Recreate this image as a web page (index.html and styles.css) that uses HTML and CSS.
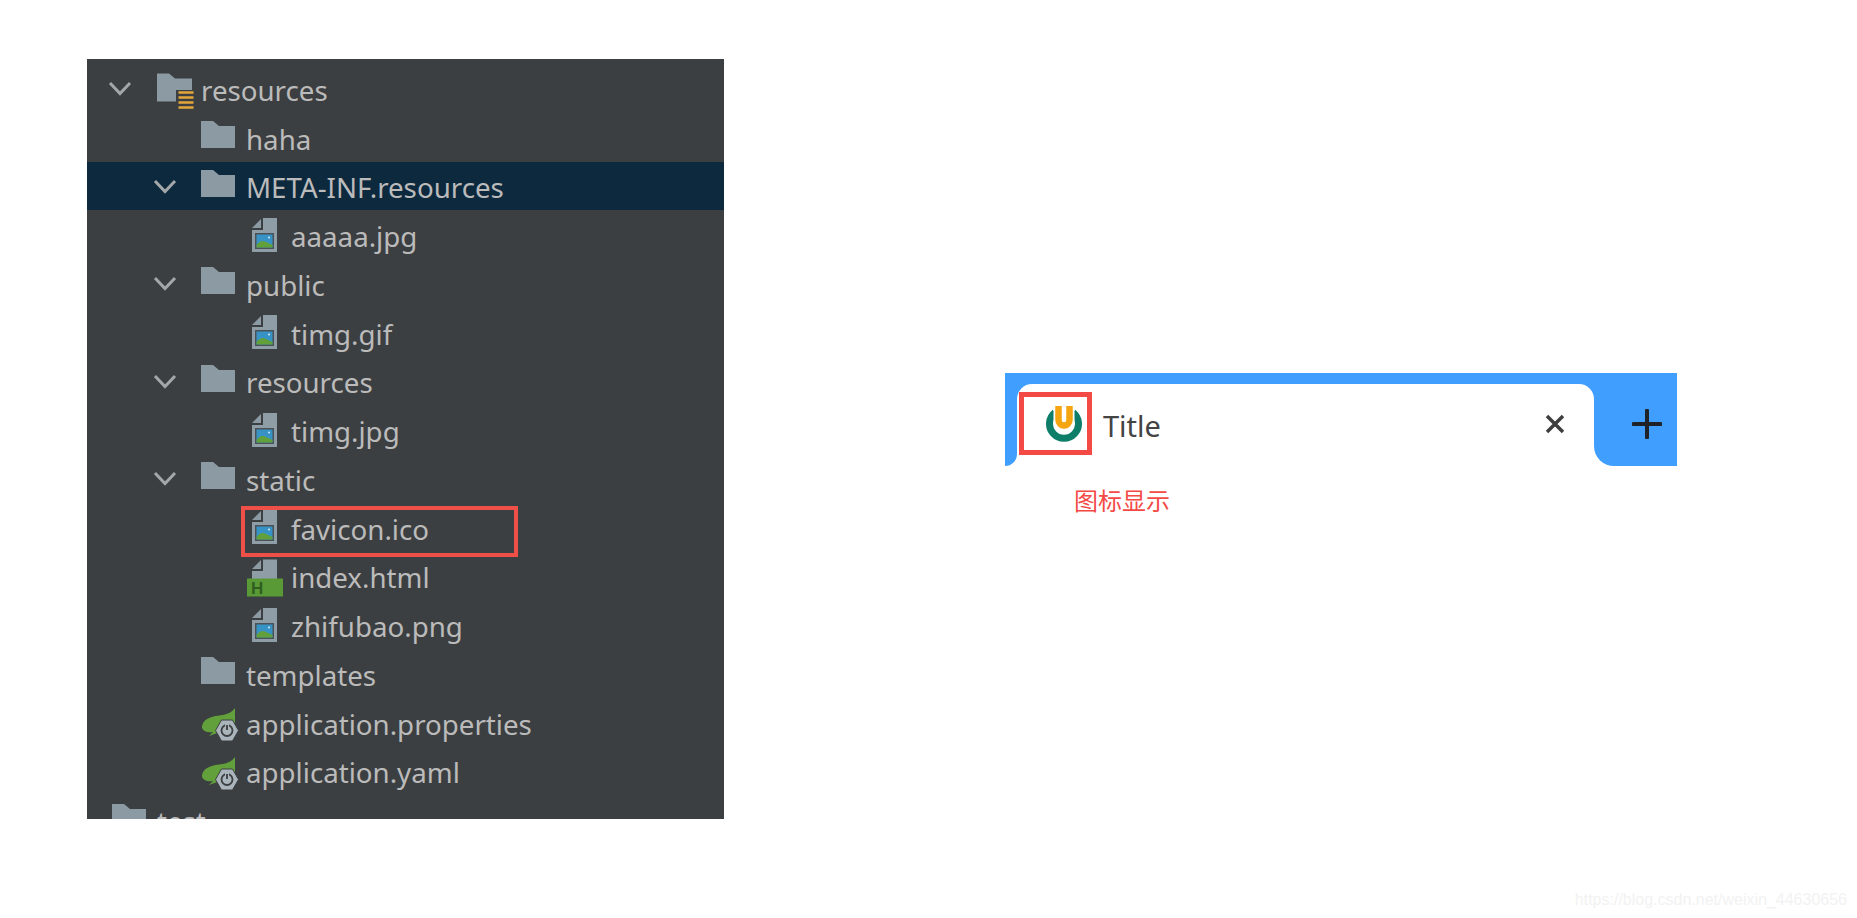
FILE: index.html
```html
<!DOCTYPE html>
<html lang="zh">
<head>
  <meta charset="UTF-8" />
  <title>favicon</title>
  <link rel="stylesheet" href="styles.css">
</head>
<body>
  <svg class="sprite" xmlns="http://www.w3.org/2000/svg">
    <symbol id="chevron" viewBox="0 0 24 24">
      <polyline points="2,7 12,17.5 22,7" fill="none" stroke="#a3a7aa" stroke-width="3"/>
    </symbol>
    <symbol id="folder" viewBox="0 0 38 38">
      <path d="M0 3 H12 L18 8 H34 V30 H0 Z" fill="#8c9aa4"/>
    </symbol>
    <symbol id="folder-res" viewBox="0 0 38 38" overflow="visible">
      <path d="M1 4.500 H13 L19 9.500 H36 V32.500 H1 Z" fill="#8c9aa4"/>
      <rect x="20" y="21" width="19" height="20" fill="#3c3f41"/>
      <path d="M22.500 23.500 H37.500 M22.500 28.500 H37.500 M22.500 33.500 H37.500 M22.500 38.500 H37.500" stroke="#e2a63b" stroke-width="2.600"/>
    </symbol>
    <symbol id="image" viewBox="0 0 38 38">
      <path d="M6 12 L15 3 V12 Z" fill="#8c9aa4"/>
      <path d="M17 2 H31 V36 H6 V14 H17 Z" fill="#8f9da6"/>
      <rect x="9" y="17" width="19" height="16" fill="#4a5257"/>
      <rect x="10.500" y="18.500" width="16" height="13" fill="#3793c6"/>
      <circle cx="23" cy="21.500" r="1" fill="#d8e8f0"/>
      <path d="M10.500 29 Q15 23 20 26 L26.500 29 V31.500 H10.500 Z" fill="#62a03c"/>
    </symbol>
    <symbol id="html" viewBox="0 0 38 38" overflow="visible">
      <path d="M6 12 L15 3 V12 Z" fill="#8c9aa4"/>
      <path d="M17 2.500 H31 V22 H6 V14 H17 Z" fill="#8f9da6"/>
      <rect x="1" y="21.500" width="36" height="18" fill="#5a9a36"/>
      <text x="5" y="37" class="html-mark">H</text>
    </symbol>
    <symbol id="spring" viewBox="0 0 38 38" overflow="visible">
      <path d="M1 25 C1 15 12 13 22 12 C27 11 31 9 34 5 V20 L19 29 L8 33 L12 29 C7 30 3 29 1 25 Z" fill="#62a03c"/>
      <path d="M20.500 17 H31.500 L37.500 27.500 L31.500 38 H20.500 L14.500 27.500 Z" fill="#a9b4bb" stroke="#3c3f41" stroke-width="1"/>
      <circle cx="26" cy="27.500" r="5.500" fill="none" stroke="#3c3f41" stroke-width="1.800"/>
      <path d="M26 21 V27" stroke="#a9b4bb" stroke-width="4"/>
      <path d="M26 22 V27" stroke="#3c3f41" stroke-width="1.800"/>
    </symbol>
  </svg>

  <div class="page">
    <div class="tree">
      <div class="row level-0">
        <svg class="arrow"><use href="#chevron"/></svg>
        <svg class="icon"><use href="#folder-res"/></svg>
        <span class="label">resources</span>
      </div>
      <div class="row level-1">
        <span class="arrow"></span>
        <svg class="icon"><use href="#folder"/></svg>
        <span class="label">haha</span>
      </div>
      <div class="row level-1 selected">
        <svg class="arrow"><use href="#chevron"/></svg>
        <svg class="icon"><use href="#folder"/></svg>
        <span class="label">META-INF.resources</span>
      </div>
      <div class="row level-2">
        <span class="arrow"></span>
        <svg class="icon"><use href="#image"/></svg>
        <span class="label">aaaaa.jpg</span>
      </div>
      <div class="row level-1">
        <svg class="arrow"><use href="#chevron"/></svg>
        <svg class="icon"><use href="#folder"/></svg>
        <span class="label">public</span>
      </div>
      <div class="row level-2">
        <span class="arrow"></span>
        <svg class="icon"><use href="#image"/></svg>
        <span class="label">timg.gif</span>
      </div>
      <div class="row level-1">
        <svg class="arrow"><use href="#chevron"/></svg>
        <svg class="icon"><use href="#folder"/></svg>
        <span class="label">resources</span>
      </div>
      <div class="row level-2">
        <span class="arrow"></span>
        <svg class="icon"><use href="#image"/></svg>
        <span class="label">timg.jpg</span>
      </div>
      <div class="row level-1">
        <svg class="arrow"><use href="#chevron"/></svg>
        <svg class="icon"><use href="#folder"/></svg>
        <span class="label">static</span>
      </div>
      <div class="row level-2">
        <span class="arrow"></span>
        <svg class="icon"><use href="#image"/></svg>
        <span class="label">favicon.ico</span>
        <span class="mark"></span>
      </div>
      <div class="row level-2">
        <span class="arrow"></span>
        <svg class="icon"><use href="#html"/></svg>
        <span class="label">index.html</span>
      </div>
      <div class="row level-2">
        <span class="arrow"></span>
        <svg class="icon"><use href="#image"/></svg>
        <span class="label">zhifubao.png</span>
      </div>
      <div class="row level-1">
        <span class="arrow"></span>
        <svg class="icon"><use href="#folder"/></svg>
        <span class="label">templates</span>
      </div>
      <div class="row level-1">
        <span class="arrow"></span>
        <svg class="icon"><use href="#spring"/></svg>
        <span class="label">application.properties</span>
      </div>
      <div class="row level-1">
        <span class="arrow"></span>
        <svg class="icon"><use href="#spring"/></svg>
        <span class="label">application.yaml</span>
      </div>
      <div class="row level-top">
        <svg class="icon"><use href="#folder"/></svg>
        <span class="label">test</span>
      </div>
    </div>

    <div class="preview">
      <div class="tab-strip">
        <div class="gutter"></div>
        <div class="tab">
          <div class="favicon-box">
            <svg class="favicon" viewBox="0 0 36 36">
              <path d="M9 6.500 A14.500 14.500 0 1 0 27 6.500" fill="none" stroke="#0e7d6a" stroke-width="7"/>
              <path d="M12.500 0 V14 A5.500 5.500 0 0 0 23.500 14 V0" fill="none" stroke="#fff" stroke-width="10"/>
              <path d="M12.500 0 V14 A5.500 5.500 0 0 0 23.500 14 V0" fill="none" stroke="#f5a510" stroke-width="6.500"/>
            </svg>
          </div>
          <span class="tab-title">Title</span>
          <svg class="close" viewBox="0 0 24 24">
            <path d="M4 4 L20 20 M20 4 L4 20" stroke="#3f3f3f" stroke-width="3.500"/>
          </svg>
        </div>
        <div class="new-tab">
          <svg class="plus" viewBox="0 0 30 30">
            <path d="M1.500 15 H28.500 M15 1.500 V28.500" stroke="#1f2327" stroke-width="4" stroke-linecap="round"/>
          </svg>
        </div>
      </div>
      <p class="caption">图标显示</p>
    </div>
  </div>

  <div class="watermark">https://blog.csdn.net/weixin_44630656</div>
</body>
</html>
```

FILE: styles.css
```css
* { box-sizing: border-box; }
html, body { height: 100%; }
body {
  margin: 0;
  background: #fff;
  overflow: hidden;
  font-family: "Noto Sans", sans-serif;
}
.sprite { display: none; }
.page {
  display: flex;
  align-items: flex-start;
  padding: 59px 0 0 87px;
}

/* project tree */
.tree {
  width: 637px;
  height: 760px;
  padding-top: 5px;
  background: #3c3f41;
  overflow: hidden;
}
.row {
  position: relative;
  display: flex;
  align-items: center;
  height: 48.75px;
  color: #bbbbbb;
  font-size: 27.7px;
  white-space: nowrap;
}
.row.selected { background: #0d293e; }
.level-top { padding-left: 25px; }
.level-0 { padding-left: 21px; }
.level-1 { padding-left: 66px; }
.level-2 { padding-left: 111px; }
.arrow {
  flex: none;
  width: 24px;
  height: 24px;
  margin-right: 24px;
}
.icon {
  flex: none;
  width: 38px;
  height: 38px;
  margin-right: 7px;
  overflow: visible;
}
.label { padding-top: 3px; }
.html-mark {
  font: bold 17px "Liberation Sans", sans-serif;
  fill: #2f5f20;
}
.mark {
  position: absolute;
  left: 154px;
  top: 3px;
  width: 277px;
  height: 51px;
  border: 4px solid #ee4f47;
}

/* browser tab */
.preview {
  width: 672px;
  margin: 314px 0 0 281px;
}
.tab-strip {
  display: flex;
  height: 93px;
  padding-top: 11px;
  background: linear-gradient(#409eff 50%, #fff 50%);
}
.gutter {
  width: 12px;
  background: #409eff;
  border-bottom-right-radius: 12px;
}
.tab {
  flex: 1;
  display: flex;
  align-items: center;
  padding: 8px 27px 11px 2px;
  background: #fff;
  border-radius: 15px 15px 0 0;
}
.favicon-box {
  display: flex;
  align-items: center;
  justify-content: flex-end;
  width: 73px;
  height: 63px;
  padding-right: 5px;
  border: 5px solid #f44a46;
}
.favicon { width: 36px; height: 36px; }
.tab-title {
  margin-left: 11px;
  padding-top: 4px;
  color: #444;
  font-size: 29px;
}
.close {
  width: 24px;
  height: 24px;
  margin-left: auto;
}
.new-tab {
  display: flex;
  align-items: center;
  justify-content: center;
  width: 83px;
  padding: 0 0 2px 22px;
  background: #409eff;
  border-bottom-left-radius: 20px;
}
.plus { width: 30px; height: 30px; }
.caption {
  margin: 16px 0 0 69px;
  color: #f44a46;
  font: 24px "Noto Sans CJK SC", sans-serif;
}

.watermark {
  position: absolute;
  right: 10px;
  bottom: 9px;
  color: #f2f2f2;
  font: 16px "Liberation Sans", sans-serif;
}
```
